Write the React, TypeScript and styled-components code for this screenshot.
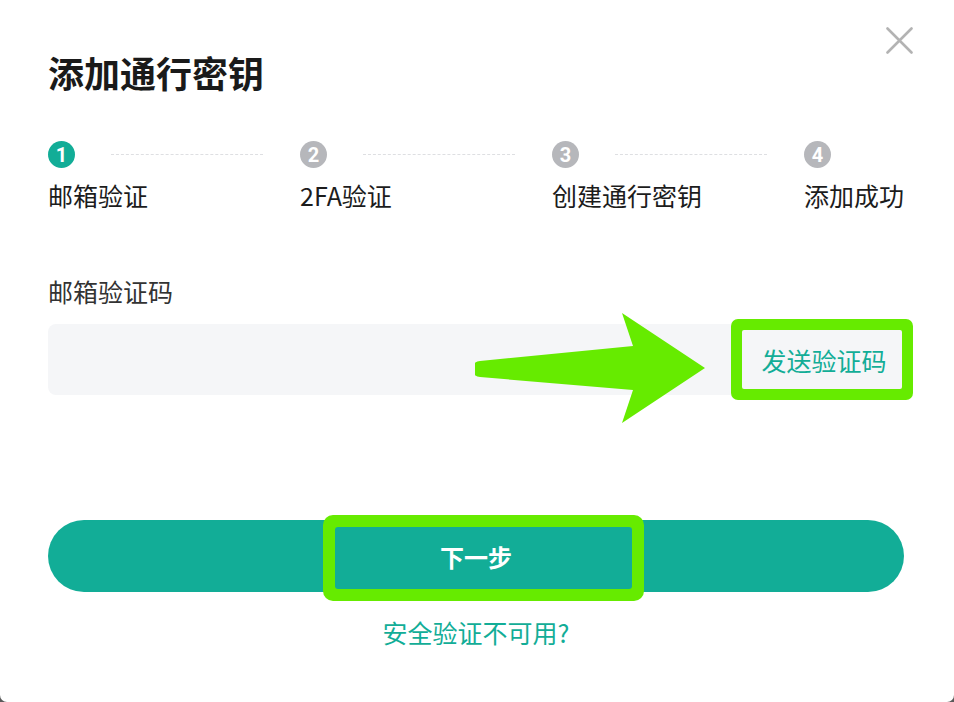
import styled, { createGlobalStyle } from 'styled-components';

const TEAL = '#12ad97';
const MARK = '#66eb00';

const GlobalStyle = createGlobalStyle`
  html, body {
    margin: 0;
    padding: 0;
    background: #5a5a5a;
  }
  * {
    box-sizing: border-box;
  }
`;

const steps = ['邮箱验证', '2FA验证', '创建通行密钥', '添加成功'];

export default function App() {
  return (
    <>
      <GlobalStyle />
      <Dialog>
        <CloseButton type="button" aria-label="关闭">
          <svg width="27" height="27" viewBox="0 0 27 27">
            <path d="M1.5 1.5 L25.5 25.5 M25.5 1.5 L1.5 25.5" stroke="#b3b3b3" strokeWidth="2.6" strokeLinecap="round" />
          </svg>
        </CloseButton>
        <Title>添加通行密钥</Title>

        <Steps>
          {steps.map((label, i) => (
            <Step key={label} $last={i === steps.length - 1}>
              <StepHead>
                <StepDot $active={i === 0}>{i + 1}</StepDot>
                {i < steps.length - 1 && <StepLine />}
              </StepHead>
              <StepLabel>{label}</StepLabel>
            </Step>
          ))}
        </Steps>

        <FieldLabel>邮箱验证码</FieldLabel>
        <Field>
          <CodeInput />
          <SendButton type="button">发送验证码</SendButton>
          <Arrow width="232" height="112" viewBox="0 0 232 112">
            <path
              d="M5 48 L158 33 L147 0 L230 55 L147 110 L158 77 L5 64 A8 8 0 0 1 5 48 Z"
              fill={MARK}
            />
          </Arrow>
        </Field>

        <NextButton type="button">
          <NextMark />
          下一步
        </NextButton>
        <HelpLink>安全验证不可用?</HelpLink>
      </Dialog>
    </>
  );
}

const Dialog = styled.div`
  position: relative;
  height: 702px;
  background: #fff;
  border-radius: 0 0 7px 7px;
  padding: 48px 50px 0 48px;
  display: flex;
  flex-direction: column;
  font-family: 'Noto Sans CJK SC', 'Noto Sans', sans-serif;
  color: #1c1c1c;
`;

const CloseButton = styled.button`
  position: absolute;
  top: 27px;
  right: 41px;
  width: 27px;
  height: 27px;
  padding: 0;
  border: none;
  background: none;
  display: flex;
  cursor: pointer;
`;

const Title = styled.h1`
  margin: 0;
  font-size: 36px;
  line-height: 48px;
  font-weight: 700;
  color: #1a1a1a;
`;

const Steps = styled.div`
  display: flex;
  margin-top: 45px;
`;

const Step = styled.div<{ $last: boolean }>`
  flex: ${(p) => (p.$last ? '0 0 auto' : '1 1 0')};
  display: flex;
  flex-direction: column;
  gap: 10px;
`;

const StepHead = styled.div`
  display: flex;
  align-items: center;
  height: 27px;
`;

const StepDot = styled.span<{ $active: boolean }>`
  flex: none;
  width: 27px;
  height: 27px;
  border-radius: 50%;
  background: ${(p) => (p.$active ? TEAL : '#b6b7bb')};
  color: #fff;
  font-family: 'Roboto', 'Noto Sans', sans-serif;
  font-weight: 700;
  font-size: 20px;
  line-height: 1;
  display: flex;
  align-items: center;
  justify-content: center;
`;

const StepLine = styled.span`
  flex: 1;
  margin: 0 37px 0 36px;
  border-top: 1px dashed #dedfe2;
`;

const StepLabel = styled.span`
  font-size: 25px;
  line-height: 34px;
  color: #1c1c1c;
  white-space: nowrap;
`;

const FieldLabel = styled.label`
  margin-top: 62px;
  font-size: 25px;
  line-height: 34px;
  color: #333;
`;

const Field = styled.div`
  position: relative;
  margin-top: 16px;
  height: 71px;
  background: #f5f6f8;
  border-radius: 8px;
  display: flex;
  align-items: center;
  padding-right: 2px;
`;

const CodeInput = styled.input`
  flex: 1;
  height: 100%;
  border: none;
  background: transparent;
  outline: none;
  padding: 0 20px;
  font-size: 25px;
  font-family: inherit;
`;

const SendButton = styled.button`
  width: 160px;
  height: 59px;
  padding: 0 0 0 4px;
  border: none;
  border-radius: 2px;
  background: #f5f6f8;
  box-shadow: 0 0 0 11px ${MARK};
  color: ${TEAL};
  font-family: inherit;
  font-size: 25px;
  line-height: 34px;
  display: flex;
  align-items: center;
  justify-content: center;
  cursor: pointer;
`;

const Arrow = styled.svg`
  position: absolute;
  left: 427px;
  top: -11px;
  pointer-events: none;
`;

const NextButton = styled.button`
  position: relative;
  margin-top: 125px;
  height: 72px;
  border: none;
  border-radius: 36px;
  background: ${TEAL};
  color: #fff;
  font-family: inherit;
  font-size: 24px;
  font-weight: 700;
  display: flex;
  align-items: center;
  justify-content: center;
  cursor: pointer;
`;

const NextMark = styled.span`
  position: absolute;
  left: 287px;
  top: 7px;
  width: 297px;
  height: 62px;
  border-radius: 3px;
  box-shadow: 0 0 0 12px ${MARK};
  pointer-events: none;
`;

const HelpLink = styled.a`
  margin-top: 23px;
  align-self: center;
  font-size: 25px;
  line-height: 34px;
  color: ${TEAL};
  cursor: pointer;
`;
